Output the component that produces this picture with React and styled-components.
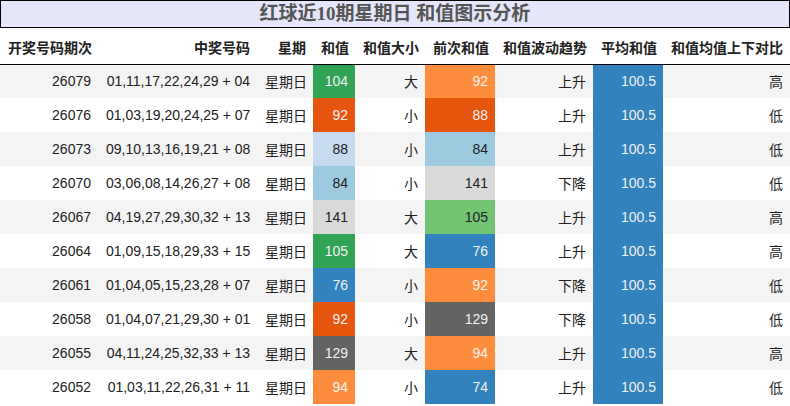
import React from "react";
import styled, { createGlobalStyle } from "styled-components";

const Global = createGlobalStyle`
  html, body { margin: 0; padding: 0; background: #ffffff; }
  body { font-family: "Liberation Sans", "Noto Sans CJK SC", sans-serif; }
`;

const Table = styled.table`
  width: 790px;
  table-layout: fixed;
  border-collapse: collapse;
  font-family: "Liberation Sans", "Noto Sans CJK SC", sans-serif;
  font-size: 14px;
  color: #222;
`;

const Caption = styled.caption`
  caption-side: top;
  box-sizing: border-box;
  height: 28px;
  line-height: 26px;
  background: #e6e6fa;
  border: 1px solid #000;
  color: #555;
  font-family: "Liberation Serif", "Noto Sans CJK SC", serif;
  font-size: 19px;
  font-weight: bold;
  text-align: center;
`;

const HeadRow = styled.tr`
  height: 36px;
  border-bottom: 1px solid #000;
`;

const Th = styled.th`
  padding: 2px 7px 0 8px;
  font-weight: bold;
  text-align: ${(p) => (p.$left ? "left" : "right")};
  white-space: nowrap;
  vertical-align: middle;
  color: #222;
`;

const Row = styled.tr`
  height: 34px;
  background: ${(p) => (p.$alt ? "#f4f4f4" : "#ffffff")};
`;

const Td = styled.td`
  padding: 0 7px 0 8px;
  text-align: right;
  white-space: nowrap;
  vertical-align: middle;
  background: ${(p) => p.$bg || "transparent"};
  color: ${(p) => (p.$light ? "#f1f1f1" : "#222")};
`;

const C = {
  dkOrange: "#e6550d",
  orange: "#fd8d3c",
  green: "#31a354",
  ltGreen: "#74c476",
  blue: "#3182bd",
  ltBlue: "#9ecae1",
  paleBlue: "#c6dbef",
  grey: "#636363",
  ltGrey: "#d9d9d9",
};

const dark = new Set([C.dkOrange, C.orange, C.green, C.blue, C.grey]);

const rows = [
  ["26079", "01,11,17,22,24,29 + 04", 104, C.green, "大", 92, C.orange, "上升", "高"],
  ["26076", "01,03,19,20,24,25 + 07", 92, C.dkOrange, "小", 88, C.dkOrange, "上升", "低"],
  ["26073", "09,10,13,16,19,21 + 08", 88, C.paleBlue, "小", 84, C.ltBlue, "上升", "低"],
  ["26070", "03,06,08,14,26,27 + 08", 84, C.ltBlue, "小", 141, C.ltGrey, "下降", "低"],
  ["26067", "04,19,27,29,30,32 + 13", 141, C.ltGrey, "大", 105, C.ltGreen, "上升", "高"],
  ["26064", "01,09,15,18,29,33 + 15", 105, C.green, "大", 76, C.blue, "上升", "高"],
  ["26061", "01,04,05,15,23,28 + 07", 76, C.blue, "小", 92, C.orange, "下降", "低"],
  ["26058", "01,04,07,21,29,30 + 01", 92, C.dkOrange, "小", 129, C.grey, "下降", "低"],
  ["26055", "04,11,24,25,32,33 + 13", 129, C.grey, "大", 94, C.orange, "上升", "高"],
  ["26052", "01,03,11,22,26,31 + 11", 94, C.orange, "小", 74, C.blue, "上升", "低"],
];

const widths = [98, 159, 56, 42, 70, 70, 98, 70, 127];
const heads = ["开奖号码期次", "中奖号码", "星期", "和值", "和值大小", "前次和值", "和值波动趋势", "平均和值", "和值均值上下对比"];

export default function App() {
  return (
    <>
      <Global />
      <Table>
        <Caption>红球近10期星期日 和值图示分析</Caption>
        <colgroup>
          {widths.map((w, i) => (
            <col key={i} style={{ width: w }} />
          ))}
        </colgroup>
        <thead>
          <HeadRow>
            {heads.map((h, i) => (
              <Th key={h} $left={i === 0}>{h}</Th>
            ))}
          </HeadRow>
        </thead>
        <tbody>
          {rows.map((r, i) => (
            <Row key={r[0]} $alt={i % 2 === 0}>
              <Td>{r[0]}</Td>
              <Td>{r[1]}</Td>
              <Td>星期日</Td>
              <Td $bg={r[3]} $light={dark.has(r[3])}>{r[2]}</Td>
              <Td>{r[4]}</Td>
              <Td $bg={r[6]} $light={dark.has(r[6])}>{r[5]}</Td>
              <Td>{r[7]}</Td>
              <Td $bg={C.blue} $light>100.5</Td>
              <Td>{r[8]}</Td>
            </Row>
          ))}
        </tbody>
      </Table>
    </>
  );
}
